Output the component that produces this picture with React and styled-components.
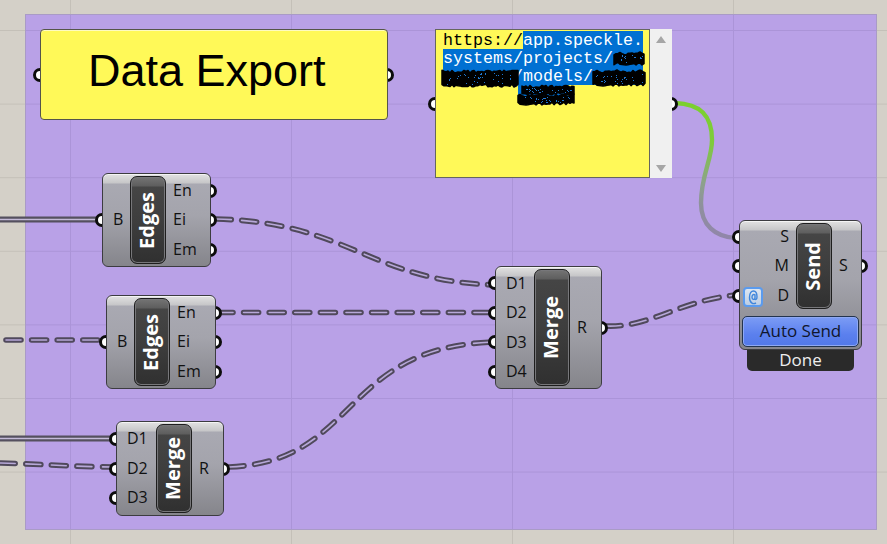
import React from 'react';
import styled, { createGlobalStyle } from 'styled-components';

const GlobalStyle = createGlobalStyle`
  html, body { margin: 0; padding: 0; width: 887px; height: 544px; overflow: hidden; }
  body { font-family: "Open Sans", "Noto Sans", sans-serif; }
`;

const Canvas = styled.div`
  position: relative;
  width: 887px;
  height: 544px;
  overflow: hidden;
  background-color: #d4d0c8;
  background-image:
    linear-gradient(to right, #c4c0b8 1px, transparent 1px),
    linear-gradient(to bottom, #c4c0b8 1px, transparent 1px);
  background-size: 221px 73.6px;
  background-position: 70px 30px;
`;

const Group = styled.div`
  position: absolute;
  left: 25px;
  top: 14px;
  width: 852px;
  height: 516px;
  box-sizing: border-box;
  border: 1px solid #a99bc6;
  background-color: #b9a1e7;
  background-image:
    linear-gradient(to right, #ab94d8 1px, transparent 1px),
    linear-gradient(to bottom, #ab94d8 1px, transparent 1px);
  background-size: 221px 73.6px;
  background-position: 44px 15px;
`;

const WireLayer = styled.svg`
  position: absolute;
  left: 0;
  top: 0;
`;

const Placed = styled.div`
  position: absolute;
  left: ${(p) => p.$x}px;
  top: ${(p) => p.$y}px;
  display: flex;
  align-items: flex-start;
`;

const Rail = styled.div`
  position: relative;
  z-index: 0;
  width: 0;
  height: ${(p) => p.$h}px;
  display: flex;
  flex-direction: column;
  justify-content: center;
`;

const PortRow = styled.div`
  height: 29.5px;
  display: flex;
  align-items: center;
`;

const Port = styled.span`
  flex: none;
  width: 14px;
  height: 14px;
  box-sizing: border-box;
  border: 3px solid #0c0c0c;
  border-radius: 50%;
  background: #fff;
  margin-left: ${(p) => (p.$side === 'in' ? '-7px' : '-8px')};
`;

const Stack = styled.div`
  position: relative;
  z-index: 1;
  display: flex;
  flex-direction: column;
  align-items: center;
`;

const Body = styled.div`
  position: relative;
  width: ${(p) => p.$w}px;
  box-sizing: border-box;
  border: 1px solid #3c3c40;
  border-radius: 6px;
  box-shadow: inset 0 1px 0 #f4f4f4;
  background: linear-gradient(
    to bottom,
    #e2e2e2 0,
    #c6c6c8 9px,
    #a9a9b2 10px,
    #a4a4ac 45%,
    #85858b 100%
  );
`;

const Main = styled.div`
  position: relative;
  height: ${(p) => p.$h - 2}px;
  display: flex;
`;

const Labels = styled.div`
  width: ${(p) => p.$w}px;
  flex: none;
  box-sizing: border-box;
  padding: ${(p) => (p.$right ? '0 7px 0 0' : p.$out ? '0 0 0 7px' : '0 0 0 10px')};
  display: flex;
  flex-direction: column;
  justify-content: center;
  align-items: ${(p) => (p.$right ? 'flex-end' : 'flex-start')};
`;

const Label = styled.div`
  height: 29.5px;
  line-height: 28px;
  font-size: 16px;
  color: #111;
`;

const Capsule = styled.div`
  flex: none;
  width: 36px;
  margin: 2px 0;
  box-sizing: border-box;
  border: 1px solid #1e1e1e;
  border-radius: 7px;
  box-shadow: inset 0 0 0 1px #77777a;
  background: linear-gradient(
    to bottom,
    #747474 0,
    #5e5e5e 9px,
    #454545 10px,
    #3e3e3e 50%,
    #303030 100%
  );
  display: flex;
  align-items: center;
  justify-content: center;
`;

const CapsuleText = styled.span`
  writing-mode: vertical-rl;
  transform: translateX(-1.5px) rotate(180deg);
  font-size: 20px;
  font-weight: 700;
  line-height: 1;
  color: #fff;
`;

const Badge = styled.span`
  position: absolute;
  left: 3px;
  top: 66px;
  width: 20px;
  height: 20px;
  box-sizing: border-box;
  border: 2px solid #5b9bee;
  border-radius: 4px;
  background: linear-gradient(to bottom, #dce6f2, #bccde4);
  display: flex;
  align-items: center;
  justify-content: center;
`;

const AutoButton = styled.div`
  margin: 5px 2px 2px;
  height: 31px;
  box-sizing: border-box;
  border: 1px solid #23344f;
  border-radius: 5px;
  box-shadow: inset 0 0 0 1px #8fa9f2;
  background: linear-gradient(to bottom, #7c9cf5, #5b80ee 60%, #5278e8);
  font-size: 17px;
  line-height: 28px;
  text-align: center;
  color: #10162c;
`;

const StatusTag = styled.div`
  width: 107px;
  height: 21px;
  box-sizing: border-box;
  border-radius: 0 0 5px 5px;
  background: #2a2a2a;
  font-size: 17px;
  line-height: 19px;
  text-align: center;
  color: #eee;
`;

const Title = styled.div`
  width: 348px;
  height: 91px;
  box-sizing: border-box;
  padding-left: 47px;
  border: 1px solid #55554a;
  border-radius: 4px;
  box-shadow: inset 0 1px 0 #fffbc0;
  background: #fff958;
  font-family: "Liberation Sans", Arial, sans-serif;
  font-size: 45px;
  line-height: 82px;
  color: #000;
  position: relative;
  z-index: 1;
`;

const TextPanel = styled.div`
  position: relative;
  z-index: 1;
  display: flex;
  height: 149px;
`;

const Note = styled.div`
  position: relative;
  width: 215px;
  box-sizing: border-box;
  padding: 1px 0 0 7px;
  border: 1px solid #66665e;
  background: #fff958;
  font-family: "Liberation Mono", "Courier New", monospace;
  font-size: 16.67px;
  line-height: 20px;
  color: #000;
`;

const NoteLine = styled.div`
  height: 18px;
  white-space: pre;
  padding-left: ${(p) => p.$indent || 0}px;
`;

const Selected = styled.span`
  background: #0070d2;
  color: #fff;
  display: inline-block;
  height: 18px;
`;

const Scribbles = styled.svg`
  position: absolute;
  left: -1px;
  top: -1px;
`;

const Scrollbar = styled.div`
  width: 22px;
  background: #f0f0f0;
  display: flex;
  flex-direction: column;
  justify-content: space-between;
  align-items: center;
  padding: 7px 0 6px;
  box-sizing: border-box;
`;

const Arrow = styled.span`
  width: 0;
  height: 0;
  border-left: 5px solid transparent;
  border-right: 5px solid transparent;
  ${(p) => (p.$down ? 'border-top: 7px solid #a6a6a6;' : 'border-bottom: 7px solid #a6a6a6;')}
`;

const Dashed = ({ d }) => (
  <g fill="none" strokeLinecap="round">
    <path d={d} stroke="#50495c" strokeWidth="5.6" strokeDasharray="15 10.6" />
    <path d={d} stroke="#b7a8d8" strokeWidth="1.6" strokeDasharray="15 10.6" />
  </g>
);

const Tree = ({ d }) => (
  <g fill="none">
    <path d={d} stroke="#55505f" strokeWidth="6" />
    <path d={d} stroke="#c4bad8" strokeWidth="1.5" />
  </g>
);

// scratched-out part of the url: a rough black band with blue specks left in it
const noise = (n) => {
  const v = Math.sin(n * 12.9898) * 43758.5453;
  return v - Math.floor(v);
};

const edgePath = (x, y, w, h, seed) => {
  let top = `M${x} ${y + h / 2}`;
  let bottom = '';
  for (let i = 0; i <= w; i += 2) {
    top += ` L${x + i} ${(y + noise(seed + i) * 3).toFixed(1)}`;
    bottom = ` L${x + i} ${(y + h - noise(seed + i + 50) * 3).toFixed(1)}` + bottom;
  }
  return `${top}${bottom} Z`;
};

const Scribble = ({ x, y, w, h, seed }) => {
  const specks = [];
  for (let i = 0; i < w / 2; i += 1) {
    specks.push(
      <rect
        key={i}
        x={(x + 3 + noise(seed + i * 3) * (w - 6)).toFixed(0)}
        y={(y + 3 + noise(seed + i * 5 + 7) * (h - 6)).toFixed(0)}
        width="1"
        height="1"
        fill="#1f78d0"
      />
    );
  }
  return (
    <g>
      <path d={edgePath(x, y, w, h, seed)} fill="#000" stroke="#000" strokeWidth="1.5" strokeLinejoin="round" />
      {specks}
    </g>
  );
};

const Component = ({ x, y, w, h, inW, capName, inputs, outputs, rightInputs, footer, badge, status }) => (
  <Placed $x={x} $y={y}>
    <Rail $h={h}>
      {inputs.map((n) => (
        <PortRow key={n}><Port $side="in" /></PortRow>
      ))}
    </Rail>
    <Stack>
      <Body $w={w}>
        <Main $h={h}>
          {badge && (
            <Badge>
              <svg width="12" height="15" viewBox="0 0 12 15" fill="none" stroke="#3f86dc" strokeWidth="1.4">
                <path d="M9 13 C6 14.5 2.5 13 2.5 7.5 C2.5 2.5 4.5 1 6.5 1 C9 1 10 4 10 7 C10 9.5 8.5 10 8.2 9" />
                <path d="M8 4.8 C6 4 4.9 5.5 5 7.5 C5.1 9.5 7 10 8 8.5 Z" />
              </svg>
            </Badge>
          )}
          <Labels $w={inW} $right={rightInputs}>
            {inputs.map((n) => <Label key={n}>{n}</Label>)}
          </Labels>
          <Capsule><CapsuleText>{capName}</CapsuleText></Capsule>
          <Labels $out $w={w - inW - 38}>
            {outputs.map((n) => <Label key={n}>{n}</Label>)}
          </Labels>
        </Main>
        {footer && <AutoButton>{footer}</AutoButton>}
      </Body>
      {status && <StatusTag>{status}</StatusTag>}
    </Stack>
    <Rail $h={h}>
      {outputs.map((n) => (
        <PortRow key={n}><Port $side="out" /></PortRow>
      ))}
    </Rail>
  </Placed>
);

export default function App() {
  return (
    <Canvas>
      <GlobalStyle />
      <Group />

      <WireLayer width="887" height="544">
        <defs>
          <linearGradient id="panelWire" gradientUnits="userSpaceOnUse" x1="0" y1="103" x2="0" y2="238">
            <stop offset="0" stopColor="#7bd02e" />
            <stop offset="0.3" stopColor="#7fcb3c" />
            <stop offset="0.6" stopColor="#8da08e" />
            <stop offset="0.78" stopColor="#8f8f9e" />
            <stop offset="1" stopColor="#9186aa" />
          </linearGradient>
        </defs>
        <Tree d="M0 219.5 H100" />
        <Tree d="M0 438.5 H118" />
        <Dashed d="M6 340 H104" />
        <Dashed d="M0 463 C40 464 80 467 114 467" />
        <Dashed d="M216 219 C350 222 370 282 497 285" />
        <Dashed d="M218 312.5 H497" />
        <Dashed d="M229 467 C360 462 340 345 497 342" />
        <Dashed d="M606 326 C650 328 680 300 737 295" />
        <path
          d="M675 103 C700 104 712 115 712 140 C712 160 701 175 701 203 C701 225 715 237 736 238"
          fill="none"
          stroke="url(#panelWire)"
          strokeWidth="4.4"
        />
      </WireLayer>

      <Placed $x={40} $y={29}>
        <Rail $h={91}><PortRow><Port $side="in" /></PortRow></Rail>
        <Title>Data Export</Title>
        <Rail $h={91}><PortRow><Port $side="out" /></PortRow></Rail>
      </Placed>

      <Placed $x={435} $y={29}>
        <Rail $h={149}><PortRow><Port $side="in" /></PortRow></Rail>
        <TextPanel>
          <Note>
            <NoteLine>https://<Selected>app.speckle.</Selected></NoteLine>
            <NoteLine><Selected>{'systems/projects/   '}</Selected></NoteLine>
            <NoteLine><Selected>{'       /models/     '}</Selected></NoteLine>
            <NoteLine $indent={75}><Selected>{'     '}</Selected></NoteLine>
            <Scribbles width="215" height="149">
              <Scribble x={179} y={23} w={31} h={13} seed={1} />
              <Scribble x={7} y={41} w={76} h={17} seed={2} />
              <Scribble x={158} y={41} w={53} h={16} seed={3} />
              <Scribble x={87} y={56} w={52} h={10} seed={4} />
              <Scribble x={83} y={65} w={57} h={11} seed={5} />
            </Scribbles>
          </Note>
          <Scrollbar>
            <Arrow />
            <Arrow $down />
          </Scrollbar>
        </TextPanel>
        <Rail $h={149}><PortRow><Port $side="out" /></PortRow></Rail>
      </Placed>

      <Component x={102} y={173} w={109} h={94} inW={27} capName="Edges" inputs={['B']} outputs={['En', 'Ei', 'Em']} />
      <Component x={106} y={295} w={110} h={94} inW={27} capName="Edges" inputs={['B']} outputs={['En', 'Ei', 'Em']} />
      <Component x={116} y={421} w={108} h={95} inW={39} capName="Merge" inputs={['D1', 'D2', 'D3']} outputs={['R']} />
      <Component x={495} y={266} w={107} h={123} inW={38} capName="Merge" inputs={['D1', 'D2', 'D3', 'D4']} outputs={['R']} />
      <Component
        x={739}
        y={220}
        w={123}
        h={92}
        inW={56}
        capName="Send"
        rightInputs
        badge
        inputs={['S', 'M', 'D']}
        outputs={['S']}
        footer="Auto Send"
        status="Done"
      />
    </Canvas>
  );
}
